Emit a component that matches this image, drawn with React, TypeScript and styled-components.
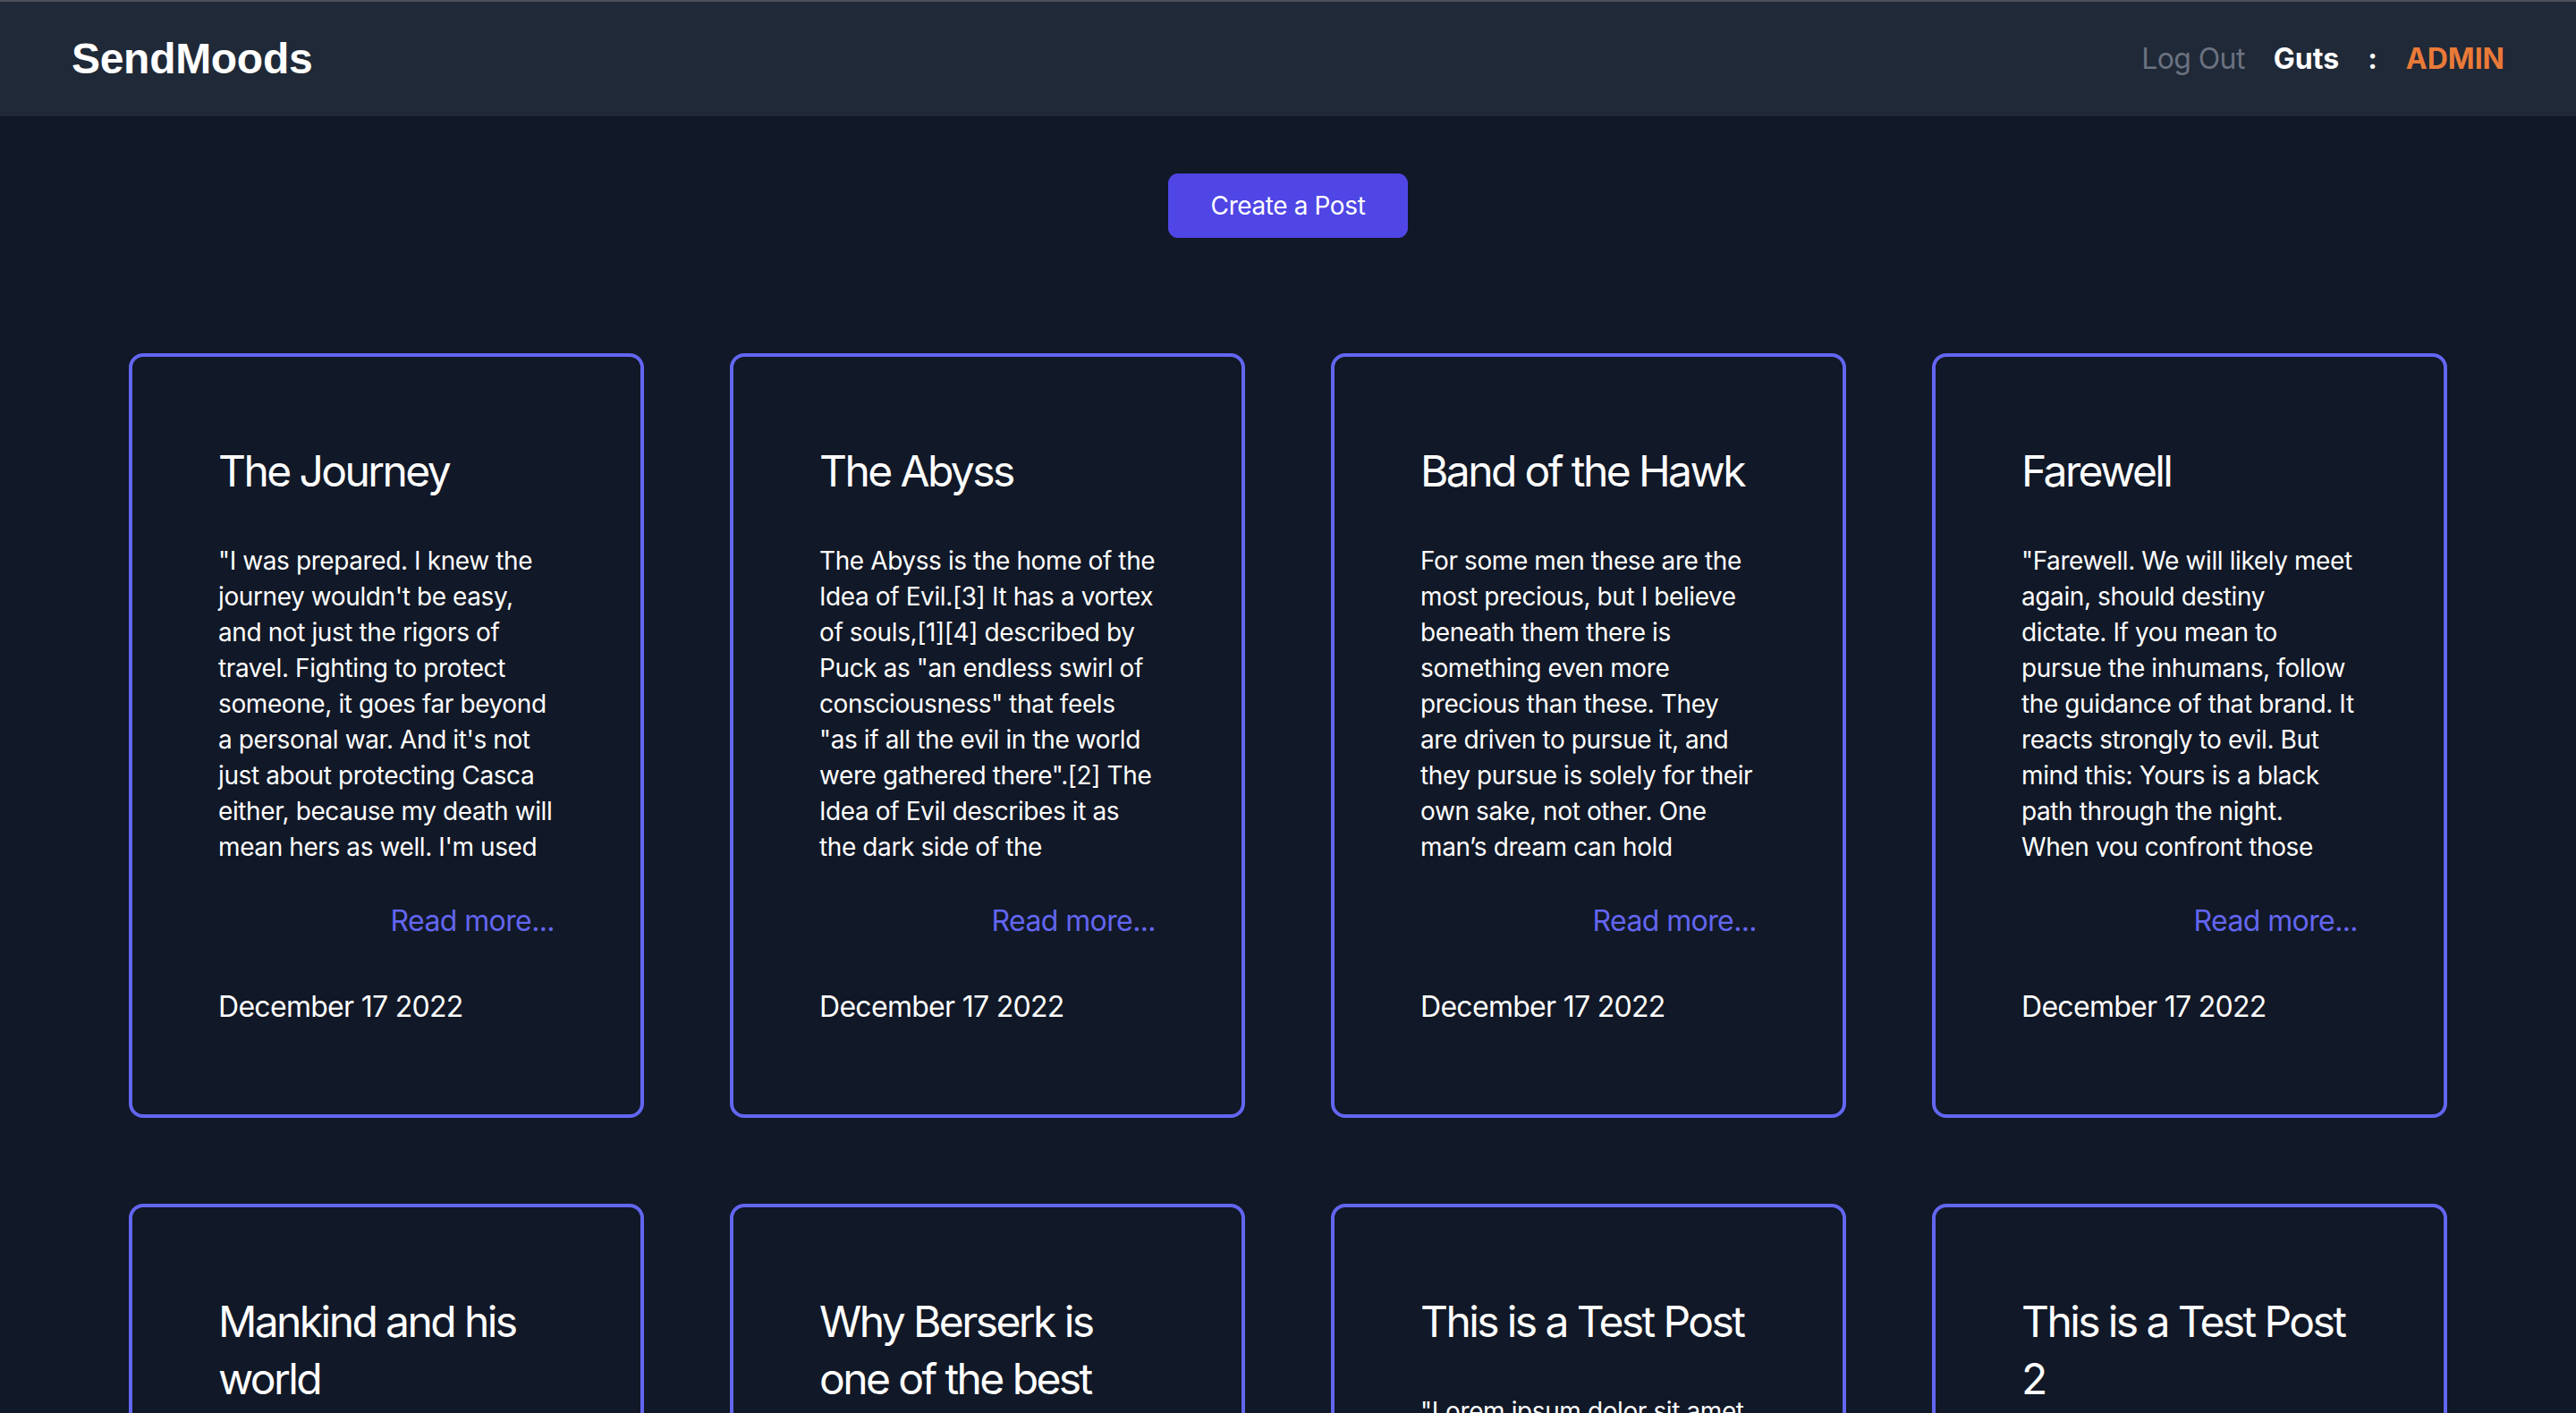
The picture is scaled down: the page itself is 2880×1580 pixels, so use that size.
import React from "react";
import styled, { createGlobalStyle } from "styled-components";

const GlobalStyle = createGlobalStyle`
  html, body {
    margin: 0;
    padding: 0;
    background: #111827;
  }
  body {
    font-family: Inter, Roboto, "Noto Sans", sans-serif;
    color: #ffffff;
    -webkit-font-smoothing: antialiased;
  }
  * { box-sizing: border-box; }
`;

const Page = styled.div`
  min-height: 100vh;
  background: #111827;
  display: flex;
  flex-direction: column;
`;

const Header = styled.header`
  height: 130px;
  border-top: 2px solid #4b5058;
  background: #1f2937;
  display: flex;
  align-items: center;
  justify-content: space-between;
  padding: 0 80px 0 80px;
`;

const Logo = styled.a`
  font-family: "Liberation Sans", Arial, sans-serif;
  font-weight: 700;
  font-size: 48px;
  line-height: 64px;
  color: #ffffff;
  text-decoration: none;
  letter-spacing: -0.3px;
`;

const NavRight = styled.nav`
  display: flex;
  align-items: center;
  gap: 32px;
  font-size: 32px;
  line-height: 48px;
`;

const NavLink = styled.a`
  color: #6b7280;
  font-weight: 400;
  letter-spacing: -0.6px;
  text-decoration: none;
`;

const NavText = styled.span<{ $tone?: "white" | "orange" }>`
  font-weight: 700;
  color: ${(p) => (p.$tone === "orange" ? "#ea7a38" : "#ffffff")};
`;

const Toolbar = styled.div`
  display: flex;
  justify-content: center;
  margin-top: 64px;
`;

const CreateButton = styled.button`
  font-family: Inter, Roboto, "Noto Sans", sans-serif;
  font-size: 28px;
  line-height: 40px;
  letter-spacing: -0.4px;
  padding: 16px 48px;
  color: #ffffff;
  background: #4f46e5;
  border: none;
  border-radius: 11px;
  cursor: pointer;
`;

const Grid = styled.section`
  display: grid;
  grid-template-columns: repeat(4, 576px);
  column-gap: 96px;
  row-gap: 96px;
  justify-content: center;
  align-items: start;
  margin-top: 129px;
  padding-bottom: 96px;
`;

const Card = styled.article`
  border: 4px solid #6366f1;
  border-radius: 16px;
  background: #111827;
  padding: 96px;
  display: flex;
  flex-direction: column;
`;

const Title = styled.h2`
  margin: 0;
  font-size: 48px;
  line-height: 64px;
  font-weight: 400;
  letter-spacing: -2.6px;
  color: #ffffff;
`;

const Body = styled.p`
  margin: 48px 0 0 0;
  font-size: 28px;
  line-height: 40px;
  letter-spacing: -0.4px;
  height: 351px;
  white-space: pre;
  overflow-x: visible;
  overflow-y: clip;
  color: #ffffff;
`;

const ReadMoreRow = styled.div`
  margin-top: 48px;
  display: flex;
  justify-content: flex-end;
`;

const ReadMore = styled.a`
  font-size: 32px;
  line-height: 48px;
  letter-spacing: -0.6px;
  color: #6366f1;
  text-decoration: none;
`;

const DateLine = styled.div`
  margin-top: 48px;
  font-size: 32px;
  line-height: 48px;
  letter-spacing: -0.7px;
  color: #ffffff;
`;

type Post = { title: string; lines: string[]; date: string };

const posts: Post[] = [
  {
    title: "The Journey",
    lines: [
      "\"I was prepared. I knew the",
      "journey wouldn't be easy,",
      "and not just the rigors of",
      "travel. Fighting to protect",
      "someone, it goes far beyond",
      "a personal war. And it's not",
      "just about protecting Casca",
      "either, because my death will",
      "mean hers as well. I'm used",
      "to fighting alone.\"",
    ],
    date: "December 17 2022",
  },
  {
    title: "The Abyss",
    lines: [
      "The Abyss is the home of the",
      "Idea of Evil.[3] It has a vortex",
      "of souls,[1][4] described by",
      "Puck as \"an endless swirl of",
      "consciousness\" that feels",
      "\"as if all the evil in the world",
      "were gathered there\".[2] The",
      "Idea of Evil describes it as",
      "the dark side of the",
      "human mind.",
    ],
    date: "December 17 2022",
  },
  {
    title: "Band of the Hawk",
    lines: [
      "For some men these are the",
      "most precious, but I believe",
      "beneath them there is",
      "something even more",
      "precious than these. They",
      "are driven to pursue it, and",
      "they pursue is solely for their",
      "own sake, not other. One",
      "man\u2019s dream can hold",
      "sway over thousands.",
    ],
    date: "December 17 2022",
  },
  {
    title: "Farewell",
    lines: [
      "\"Farewell. We will likely meet",
      "again, should destiny",
      "dictate. If you mean to",
      "pursue the inhumans, follow",
      "the guidance of that brand. It",
      "reacts strongly to evil. But",
      "mind this: Yours is a black",
      "path through the night.",
      "When you confront those",
      "who dwell in darkness.\"",
    ],
    date: "December 17 2022",
  },
  {
    title: "Mankind and his world",
    lines: [
      "Mankind has always struggled",
      "against the world it was born",
      "into, searching for meaning",
      "in the face of suffering.",
    ],
    date: "December 17 2022",
  },
  {
    title: "Why Berserk is one of the best",
    lines: [
      "Berserk is a story about",
      "struggle, ambition and the",
      "will to keep going no matter",
      "what happens.",
    ],
    date: "December 17 2022",
  },
  {
    title: "This is a Test Post",
    lines: [
      "\"Lorem ipsum dolor sit amet,",
      "consectetur adipiscing elit,",
      "sed do eiusmod tempor",
      "incididunt ut labore et dolore",
      "magna aliqua.\"",
    ],
    date: "December 17 2022",
  },
  {
    title: "This is a Test Post 2",
    lines: [
      "Lorem ipsum dolor sit amet,",
      "consectetur adipiscing elit,",
      "sed do eiusmod tempor",
      "incididunt ut labore.",
    ],
    date: "December 17 2022",
  },
];

function PostCard({ post }: { post: Post }) {
  return (
    <Card>
      <Title>{post.title}</Title>
      <Body>{post.lines.join("\n")}</Body>
      <ReadMoreRow>
        <ReadMore href="#">Read more...</ReadMore>
      </ReadMoreRow>
      <DateLine>{post.date}</DateLine>
    </Card>
  );
}

export default function App() {
  return (
    <>
      <GlobalStyle />
      <Page>
        <Header>
          <Logo href="#">SendMoods</Logo>
          <NavRight>
            <NavLink href="#">Log Out</NavLink>
            <NavText>Guts</NavText>
            <NavText>:</NavText>
            <NavText $tone="orange">ADMIN</NavText>
          </NavRight>
        </Header>
        <Toolbar>
          <CreateButton>Create a Post</CreateButton>
        </Toolbar>
        <Grid>
          {posts.map((p) => (
            <PostCard key={p.title} post={p} />
          ))}
        </Grid>
      </Page>
    </>
  );
}
